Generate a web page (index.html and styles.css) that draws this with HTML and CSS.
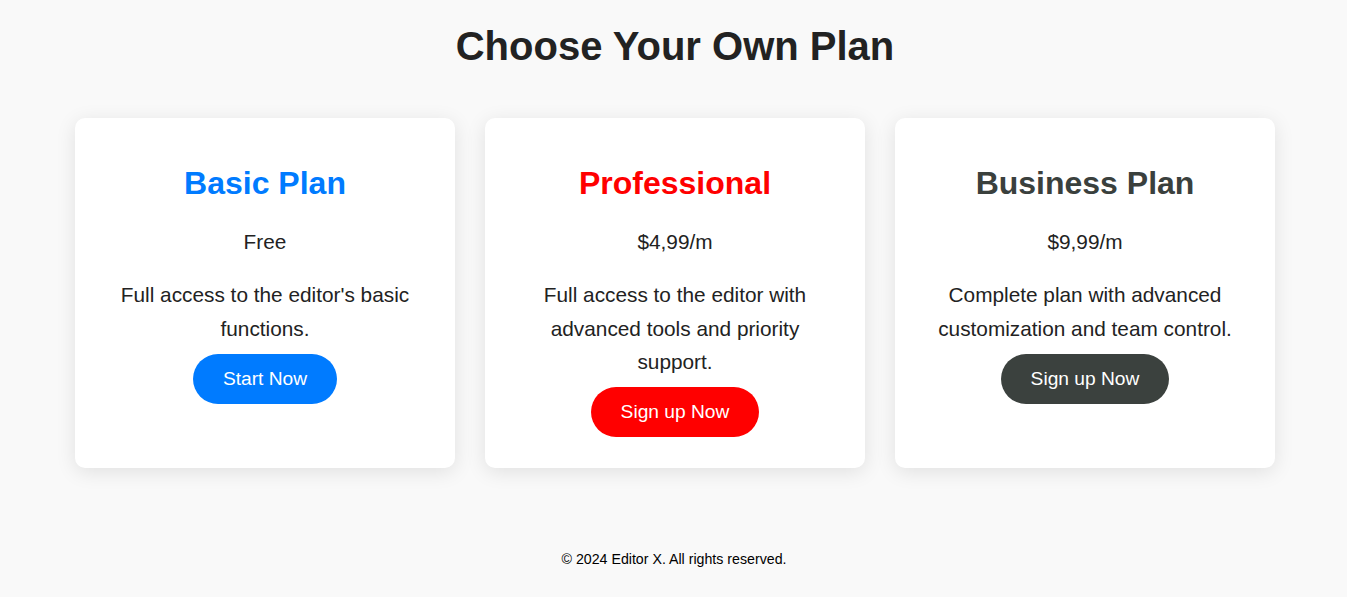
FILE: index.html
```html
<!DOCTYPE html>
<html lang="en">
<head>
<meta charset="utf-8">
<title>Choose Your Own Plan</title>
<link rel="stylesheet" href="styles.css">
</head>
<body>
<main class="page">
  <h1 class="page-title">Choose Your Own Plan</h1>
  <section class="plans">
    <div class="card card-basic">
      <h2 class="plan-name">Basic Plan</h2>
      <p class="plan-price">Free</p>
      <p class="plan-desc">Full access to the editor's basic functions.</p>
      <a class="plan-btn" href="#">Start Now</a>
    </div>
    <div class="card card-pro">
      <h2 class="plan-name">Professional</h2>
      <p class="plan-price">$4,99/m</p>
      <p class="plan-desc">Full access to the editor with advanced tools and priority support.</p>
      <a class="plan-btn" href="#">Sign up Now</a>
    </div>
    <div class="card card-business">
      <h2 class="plan-name">Business Plan</h2>
      <p class="plan-price">$9,99/m</p>
      <p class="plan-desc">Complete plan with advanced customization and team control.</p>
      <a class="plan-btn" href="#">Sign up Now</a>
    </div>
  </section>
</main>
<footer class="footer">© 2024 Editor X. All rights reserved.</footer>
</body>
</html>
```

FILE: styles.css
```css
html, body {
  margin: 0;
  padding: 0;
}
body {
  background: #f9f9f9;
  font-family: "Liberation Sans", Arial, sans-serif;
  color: #222;
  line-height: 1.6;
}
.page {
  display: flex;
  flex-direction: column;
  align-items: center;
  padding-left: 3px;
}
.page-title {
  margin: 18px 0 0;
  font-size: 40px;
  line-height: 56px;
  font-weight: bold;
  color: #222;
  text-align: center;
}
.plans {
  display: flex;
  gap: 30px;
  margin-top: 44px;
  align-items: stretch;
}
.card {
  width: 380px;
  box-sizing: border-box;
  background: #fff;
  border-radius: 10px;
  box-shadow: 0 4px 20px rgba(0, 0, 0, 0.1);
  padding: 40px 40px 31px;
  display: flex;
  flex-direction: column;
  align-items: center;
  text-align: center;
}
.plan-name {
  margin: 0;
  font-size: 32px;
  line-height: 51.2px;
  font-weight: bold;
}
.plan-price {
  margin: 16px 0 0;
  font-size: 20.8px;
  line-height: 33.28px;
  color: #222;
}
.plan-desc {
  margin: 20px 0 0;
  font-size: 20.8px;
  line-height: 33.28px;
  color: #222;
}
.plan-btn {
  display: inline-block;
  margin-top: 9px;
  padding: 10px 30px;
  font-size: 19.2px;
  line-height: 30px;
  color: #fff;
  text-decoration: none;
  border-radius: 25px;
}
.card-basic .plan-name { color: #007bff; }
.card-basic .plan-btn { background: #007bff; }
.card-pro .plan-name { color: #ff0000; }
.card-pro .plan-btn { background: #ff0000; }
.card-business .plan-name { color: #3a403d; }
.card-business .plan-btn { background: #3b413e; }
.footer {
  margin-top: 80px;
  padding-left: 1px;
  text-align: center;
  font-size: 14.2px;
  line-height: 22px;
  color: #000;
}
```
